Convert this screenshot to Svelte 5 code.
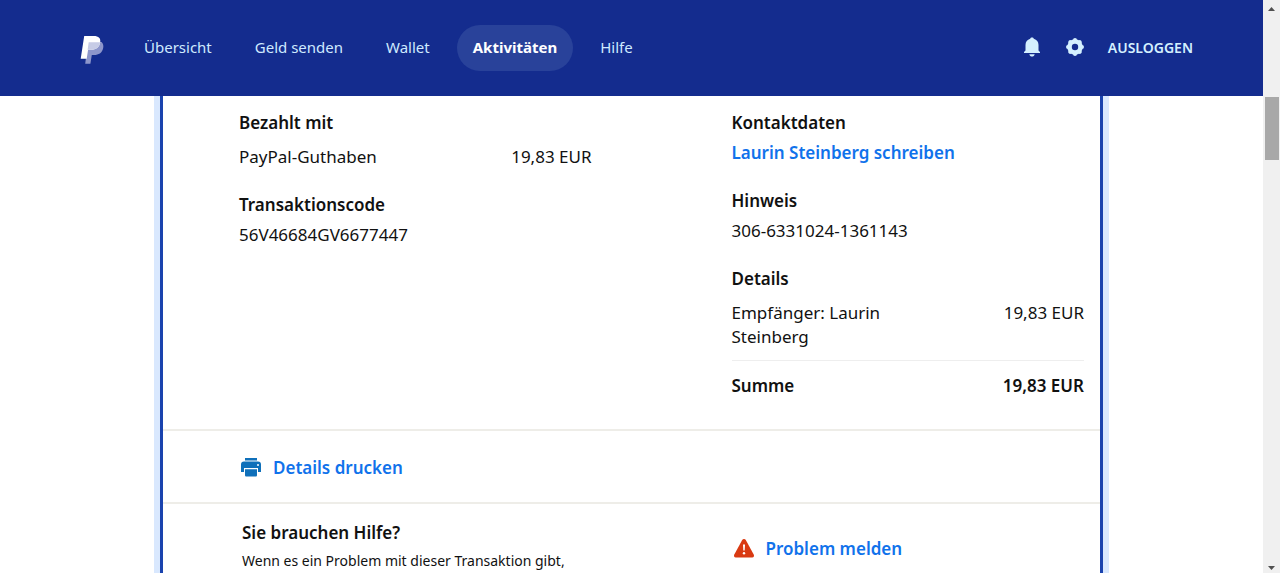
<script lang="ts">
	const links = ['Übersicht', 'Geld senden', 'Wallet', 'Aktivitäten', 'Hilfe'];
	let active: string = 'Aktivitäten';
	const amount: string = '19,83 EUR';
</script>

<div class="window">
	<div class="page">
		<header class="header">
			<a class="logo" href="#home" aria-label="PayPal">
				<svg width="24" height="30" viewBox="0 0 24 30">
					<path fill="#8d96cb" d="M8 7h13.500c1.700 1.500 2.200 3.600 1.700 6-1.100 5-4.500 7-9 7h-2.400l-1.400 8.800H5.200z"/>
					<path fill="#fff" d="M4.200 1h9.600c4.800 0 7.200 2.300 6.400 6.500-.9 5-4.300 7.300-9 7.300H8.100L6.700 23.800H.7z"/>
					<path fill="#c7cce6" d="M8.700 7.200h10.500c.6 0 1 .1 1 .3-.9 5-4.300 7.300-9 7.300H7.600z"/>
				</svg>
			</a>
			<nav class="nav">
				{#each links as link}
					<a class="nav-link" class:is-active={link === active} href="#{link}" on:click={() => (active = link)}>{link}</a>
				{/each}
			</nav>
			<div class="tools">
				<button class="tool" aria-label="Benachrichtigungen">
					<svg width="20" height="20" viewBox="0 0 20 20">
						<path fill="currentColor" d="M10 .5c1 0 1.600.5 1.800 1.300C14.800 2.600 16.500 5 16.500 8v5.500l1.500 1.600V16H2v-.9l1.500-1.600V8c0-3 1.700-5.400 4.700-6.200C8.400 1 9 .5 10 .5zM7.300 17.200h5.400c-.4 1.400-1.300 2.300-2.700 2.300s-2.300-.9-2.700-2.300z"/>
					</svg>
				</button>
				<button class="tool" aria-label="Einstellungen">
					<svg width="20" height="20" viewBox="0 0 20 20" stroke="currentColor">
						<circle cx="10" cy="10" r="5.500" fill="none" stroke-width="4.500"/>
						<path stroke-width="4" stroke-linecap="round" d="M10 3v14M3 10h14M5.200 5.200l9.600 9.600M14.800 5.200l-9.600 9.600"/>
						<circle cx="10" cy="10" r="3.200" fill="#142c8e" stroke="none"/>
					</svg>
				</button>
				<a class="logout" href="#logout">AUSLOGGEN</a>
			</div>
		</header>

		<main class="card">
			<section class="details">
				<div class="column">
					<div class="block">
						<h2>Bezahlt mit</h2>
						<div class="row">
							<span>PayPal-Guthaben</span>
							<span>{amount}</span>
						</div>
					</div>
					<div class="block">
						<h2>Transaktionscode</h2>
						<p>56V46684GV6677447</p>
					</div>
				</div>
				<div class="column">
					<div class="block">
						<h2>Kontaktdaten</h2>
						<a class="action" href="#contact">Laurin Steinberg schreiben</a>
					</div>
					<div class="block">
						<h2>Hinweis</h2>
						<p>306-6331024-1361143</p>
					</div>
					<div class="block">
						<h2>Details</h2>
						<div class="row">
							<span class="recipient">Empfänger: Laurin Steinberg</span>
							<span>{amount}</span>
						</div>
						<div class="row total">
							<span>Summe</span>
							<span>{amount}</span>
						</div>
					</div>
				</div>
			</section>

			<section class="print">
				<a class="action with-icon" href="#print">
					<svg width="24" height="24" viewBox="0 0 24 24">
						<path fill="#0f70ba" d="M6 2h12v2.500H6zM5 5.500h14c2 0 3 1 3 3V16h-3v-4H5v4H2V8.500c0-2 1-3 3-3zM6 13.300h12V19c0 1-.5 1.500-1.500 1.500h-9C6.500 20.500 6 20 6 19z"/>
						<circle cx="19" cy="9" r="1" fill="#fff"/>
					</svg>
					Details drucken
				</a>
			</section>

			<section class="help">
				<div>
					<h2>Sie brauchen Hilfe?</h2>
					<p class="small">Wenn es ein Problem mit dieser Transaktion gibt,</p>
				</div>
				<a class="action with-icon" href="#problem">
					<svg width="24" height="24" viewBox="0 0 24 24">
						<path fill="#d93a12" d="M12 2c.8 0 1.400.4 1.800 1.100l7.900 14.400c.8 1.500.1 3-1.500 3H3.800c-1.600 0-2.300-1.500-1.500-3l7.900-14.400C10.600 2.400 11.200 2 12 2z"/>
						<path fill="#fff" d="M11 7.500h2l-.3 6h-1.400z"/>
						<circle cx="12" cy="16.300" r="1.200" fill="#fff"/>
					</svg>
					Problem melden
				</a>
			</section>
		</main>
	</div>

	<div class="scrollbar">
		<svg width="17" height="17" viewBox="0 0 17 17"><path fill="#505050" d="M5 11l3.500-4 3.500 4z"/></svg>
		<div class="track"><div class="thumb"></div></div>
		<svg width="17" height="17" viewBox="0 0 17 17"><path fill="#505050" d="M5 10l3.500 4 3.500-4z"/></svg>
	</div>
</div>

<style>
	:global(body) {
		background: #fff;
	}

	.window {
		display: grid;
		grid-template-columns: 1fr 17px;
		height: 100vh;
		overflow: hidden;
		font-family: "Noto Sans", sans-serif;
		font-size: 17px;
		line-height: 24px;
		color: #111;
	}

	.page {
		min-width: 0;
		overflow: hidden;
		display: flex;
		flex-direction: column;
	}

	a {
		text-decoration: none;
	}

	h2,
	p {
		margin: 0;
		font-size: inherit;
	}

	h2,
	.action {
		font-size: 17px;
		font-weight: 600;
	}

	.header {
		display: flex;
		align-items: center;
		flex-shrink: 0;
		height: 96px;
		padding: 0 70px 0 80px;
		box-sizing: border-box;
		background: #142c8e;
	}

	.logo {
		padding-top: 3px;
	}

	.logo svg,
	.tool svg,
	.with-icon svg {
		display: block;
	}

	.nav {
		display: flex;
		gap: 11px;
		margin-left: 24px;
	}

	.nav-link {
		padding: 10px 16px 12px;
		border-radius: 24px;
		font-size: 15px;
		color: #cfeaff;
	}

	.nav-link.is-active {
		background: #29429a;
		color: #fff;
		font-weight: 700;
	}

	.tools {
		display: flex;
		align-items: center;
		gap: 23px;
		margin-left: auto;
		color: #d4f0ff;
	}

	.tool {
		padding: 0 0 3px;
		border: none;
		background: none;
		color: inherit;
		cursor: pointer;
	}

	.logout {
		font-size: 14px;
		font-weight: 600;
		color: inherit;
	}

	.card {
		flex: 1 0 auto;
		width: 943px;
		max-width: 100%;
		margin: 0 auto;
		box-sizing: border-box;
		border: solid #1a43ae;
		border-width: 0 3px;
		box-shadow: 0 0 0 6px #d9e8fe;
		clip-path: inset(0 -6px);
	}

	.details,
	.help {
		display: grid;
		grid-template-columns: 1fr 1fr;
		column-gap: 140px;
		padding: 15px 16px 31px 76px;
	}

	.column {
		display: flex;
		flex-direction: column;
		gap: 24px;
	}

	.block {
		display: flex;
		flex-direction: column;
		gap: 6px;
	}

	.row {
		display: flex;
		justify-content: space-between;
		padding-top: 4px;
	}

	.recipient {
		width: 50%;
	}

	.total {
		margin-top: 5px;
		padding-top: 13px;
		border-top: 1px solid #eee;
		font-weight: 600;
	}

	.action {
		color: #1072eb;
	}

	.with-icon {
		display: flex;
		align-items: center;
		gap: 10px;
	}

	.print {
		padding: 25px 76px 22px;
		border: solid #eeede8;
		border-width: 2px 0;
	}

	.help {
		padding: 17px 16px 16px 79px;
		column-gap: 137px;
		align-items: center;
	}

	.small {
		padding: 6px 0;
		font-size: 14px;
		line-height: 20px;
	}

	.scrollbar {
		display: flex;
		flex-direction: column;
		background: #f0f0f0;
	}

	.track {
		flex: 1;
		padding: 80px 1px 0 2px;
	}

	.thumb {
		height: 63px;
		background: #a8a8a8;
	}
</style>
